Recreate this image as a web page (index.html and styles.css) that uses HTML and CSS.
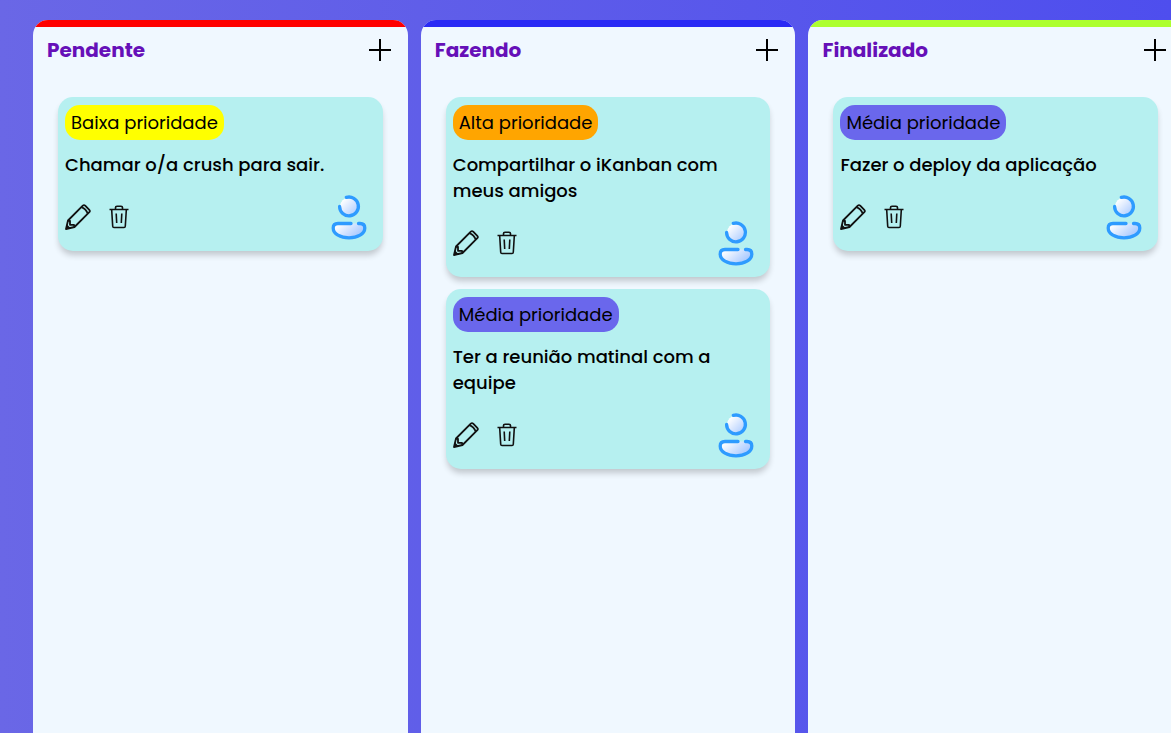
FILE: index.html
```
<!DOCTYPE html>
<html lang="pt-BR">
<head>
<meta charset="utf-8">
<meta name="viewport" content="width=device-width, initial-scale=1">
<title>iKanban</title>
<link rel="stylesheet" href="styles.css">
</head>
<body>
<svg class="sprite" aria-hidden="true">
  <defs>
    <linearGradient id="skin" x1="0" y1="0" x2="1" y2="1"><stop offset=".15" stop-color="#fff"/><stop offset="1" stop-color="#a4c6ff"/></linearGradient>
    <linearGradient id="shirt" x1="0" y1="0" x2="1" y2=".5"><stop offset=".15" stop-color="#fff"/><stop offset="1" stop-color="#a4c6ff"/></linearGradient>
    <symbol id="plus" viewBox="0 0 26 26"><path d="M13 2v22M2 13h22" fill="none" stroke="#000" stroke-width="2"/></symbol>
    <symbol id="pencil" viewBox="0 0 26 26"><path d="M1 25 3 16.500 17.800 1.700Q19 .6 20.200 1.700L24.300 5.800Q25.400 7 24.300 8.200L9.500 23zM3 16.500L5 16.800V20.800H9L9.500 23M16.500 3.200Q21 5 22.800 9.700" fill="none" stroke="#111" stroke-width="1.800" stroke-linejoin="round"/><path d="M1 25 2 20.500 5.500 24z" fill="#111"/></symbol>
    <symbol id="trash" viewBox="0 0 20 24"><path d="M.5 4.500h19M6.500 4V2.500Q6.500 1.300 8 1.300h4Q13.500 1.300 13.500 2.500V4M2.700 5 3.700 21.200Q3.800 22.500 5 22.500H15Q16.200 22.500 16.300 21.200L17.300 5M7.200 8.500l.5 9.500M12.800 8.500l-.5 9.500" fill="none" stroke="#111" stroke-width="1.600"/></symbol>
    <symbol id="user" viewBox="0 -1 54 53">
      <circle cx="27" cy="15.500" r="9" fill="url(#skin)"/>
      <path d="M12 32.500H42Q45 33 43 38.500Q39 46.500 27 46.500Q15 46.500 11 38.500Q9.500 33 12 32.500z" fill="url(#shirt)"/>
      <path d="M24.300 6.400A9.400 9.400 0 1 1 17.600 15.500M29 32.500H16C12.800 32.500 11.200 34 11.200 37C11.200 43 18.500 46.800 27 46.800S42.800 43 42.800 37C42.800 34 41.200 32.500 38 32.500H36.500" fill="none" stroke="#2e9bff" stroke-width="3.300" stroke-linecap="round"/>
    </symbol>
  </defs>
</svg>
<main class="board">
  <section class="column column-pending">
    <header class="column-header"><h2 class="column-title">Pendente</h2><button class="icon-button" aria-label="Adicionar em Pendente"><svg class="icon-plus"><use href="#plus"/></svg></button></header>
    <div class="cards">
      <article class="card">
        <span class="tag tag-low">Baixa prioridade</span>
        <p class="description">Chamar o/a crush para sair.</p>
        <footer class="card-footer"><div class="actions"><button class="icon-button" aria-label="Editar"><svg class="icon-pencil"><use href="#pencil"/></svg></button><button class="icon-button" aria-label="Excluir"><svg class="icon-trash"><use href="#trash"/></svg></button></div><svg class="avatar" role="img" aria-label="Usuário"><use href="#user"/></svg></footer>
      </article>
    </div>
  </section>
  <section class="column column-doing">
    <header class="column-header"><h2 class="column-title">Fazendo</h2><button class="icon-button" aria-label="Adicionar em Fazendo"><svg class="icon-plus"><use href="#plus"/></svg></button></header>
    <div class="cards">
      <article class="card">
        <span class="tag tag-high">Alta prioridade</span>
        <p class="description">Compartilhar o iKanban com meus amigos</p>
        <footer class="card-footer"><div class="actions"><button class="icon-button" aria-label="Editar"><svg class="icon-pencil"><use href="#pencil"/></svg></button><button class="icon-button" aria-label="Excluir"><svg class="icon-trash"><use href="#trash"/></svg></button></div><svg class="avatar" role="img" aria-label="Usuário"><use href="#user"/></svg></footer>
      </article>
      <article class="card">
        <span class="tag tag-medium">Média prioridade</span>
        <p class="description">Ter a reunião matinal com a equipe</p>
        <footer class="card-footer"><div class="actions"><button class="icon-button" aria-label="Editar"><svg class="icon-pencil"><use href="#pencil"/></svg></button><button class="icon-button" aria-label="Excluir"><svg class="icon-trash"><use href="#trash"/></svg></button></div><svg class="avatar" role="img" aria-label="Usuário"><use href="#user"/></svg></footer>
      </article>
    </div>
  </section>
  <section class="column column-done">
    <header class="column-header"><h2 class="column-title">Finalizado</h2><button class="icon-button" aria-label="Adicionar em Finalizado"><svg class="icon-plus"><use href="#plus"/></svg></button></header>
    <div class="cards">
      <article class="card">
        <span class="tag tag-medium">Média prioridade</span>
        <p class="description">Fazer o deploy da aplicação</p>
        <footer class="card-footer"><div class="actions"><button class="icon-button" aria-label="Editar"><svg class="icon-pencil"><use href="#pencil"/></svg></button><button class="icon-button" aria-label="Excluir"><svg class="icon-trash"><use href="#trash"/></svg></button></div><svg class="avatar" role="img" aria-label="Usuário"><use href="#user"/></svg></footer>
      </article>
    </div>
  </section>
</main>
</body>
</html>
```
FILE: styles.css
```
* { box-sizing: border-box; }
body {
  margin: 0;
  font-family: Poppins, Inter, "Open Sans", sans-serif;
  font-size: 18px;
  color: #000;
}
.sprite { position: absolute; width: 0; height: 0; }
.board {
  display: flex;
  gap: 13px;
  min-height: 100vh;
  padding: 20px 0 0 33px;
  overflow: hidden;
  background: linear-gradient(90deg, #6a67e6, #4e4eee);
}
.column {
  flex: 0 0 32vw;
  border-radius: 15px 15px 0 0;
  overflow: hidden;
  background: #f0f8ff;
}
.column::before { content: ""; display: block; height: 7px; background: var(--accent); }
.column-pending { --accent: #ff0000; }
.column-doing { --accent: #2a2af5; }
.column-done { --accent: #adff2f; }
.column-header {
  display: flex;
  align-items: center;
  justify-content: space-between;
  min-height: 46px;
  padding: 0 15px 0 14px;
}
.column-title { margin: 0; font-size: 20px; line-height: 30px; font-weight: 700; color: #6610b8; }
.icon-button { display: flex; padding: 0; border: 0; background: none; cursor: pointer; }
.icon-plus, .icon-pencil { width: 26px; height: 26px; }
.icon-trash { width: 20px; height: 24px; }
.cards { display: flex; flex-direction: column; gap: 12px; padding: 24px 25px; }
.card {
  display: flex;
  flex-direction: column;
  align-items: flex-start;
  gap: 12px;
  padding: 8px 7px;
  border-radius: 15px;
  background: #b6f0f0;
  box-shadow: 0 5px 6px -1px rgba(0, 0, 0, .2);
}
.tag { padding: 4px 6px; border-radius: 15px; line-height: 27px; }
.tag-low { background: #ffff00; }
.tag-high { background: #ffa500; }
.tag-medium { background: #6a67ec; }
.description { margin: 0; max-width: 280px; line-height: 26px; font-weight: 500; }
.card-footer { display: flex; align-items: center; justify-content: space-between; align-self: stretch; }
.actions { display: flex; align-items: center; gap: 18px; }
.avatar { width: 54px; height: 53px; }
```
